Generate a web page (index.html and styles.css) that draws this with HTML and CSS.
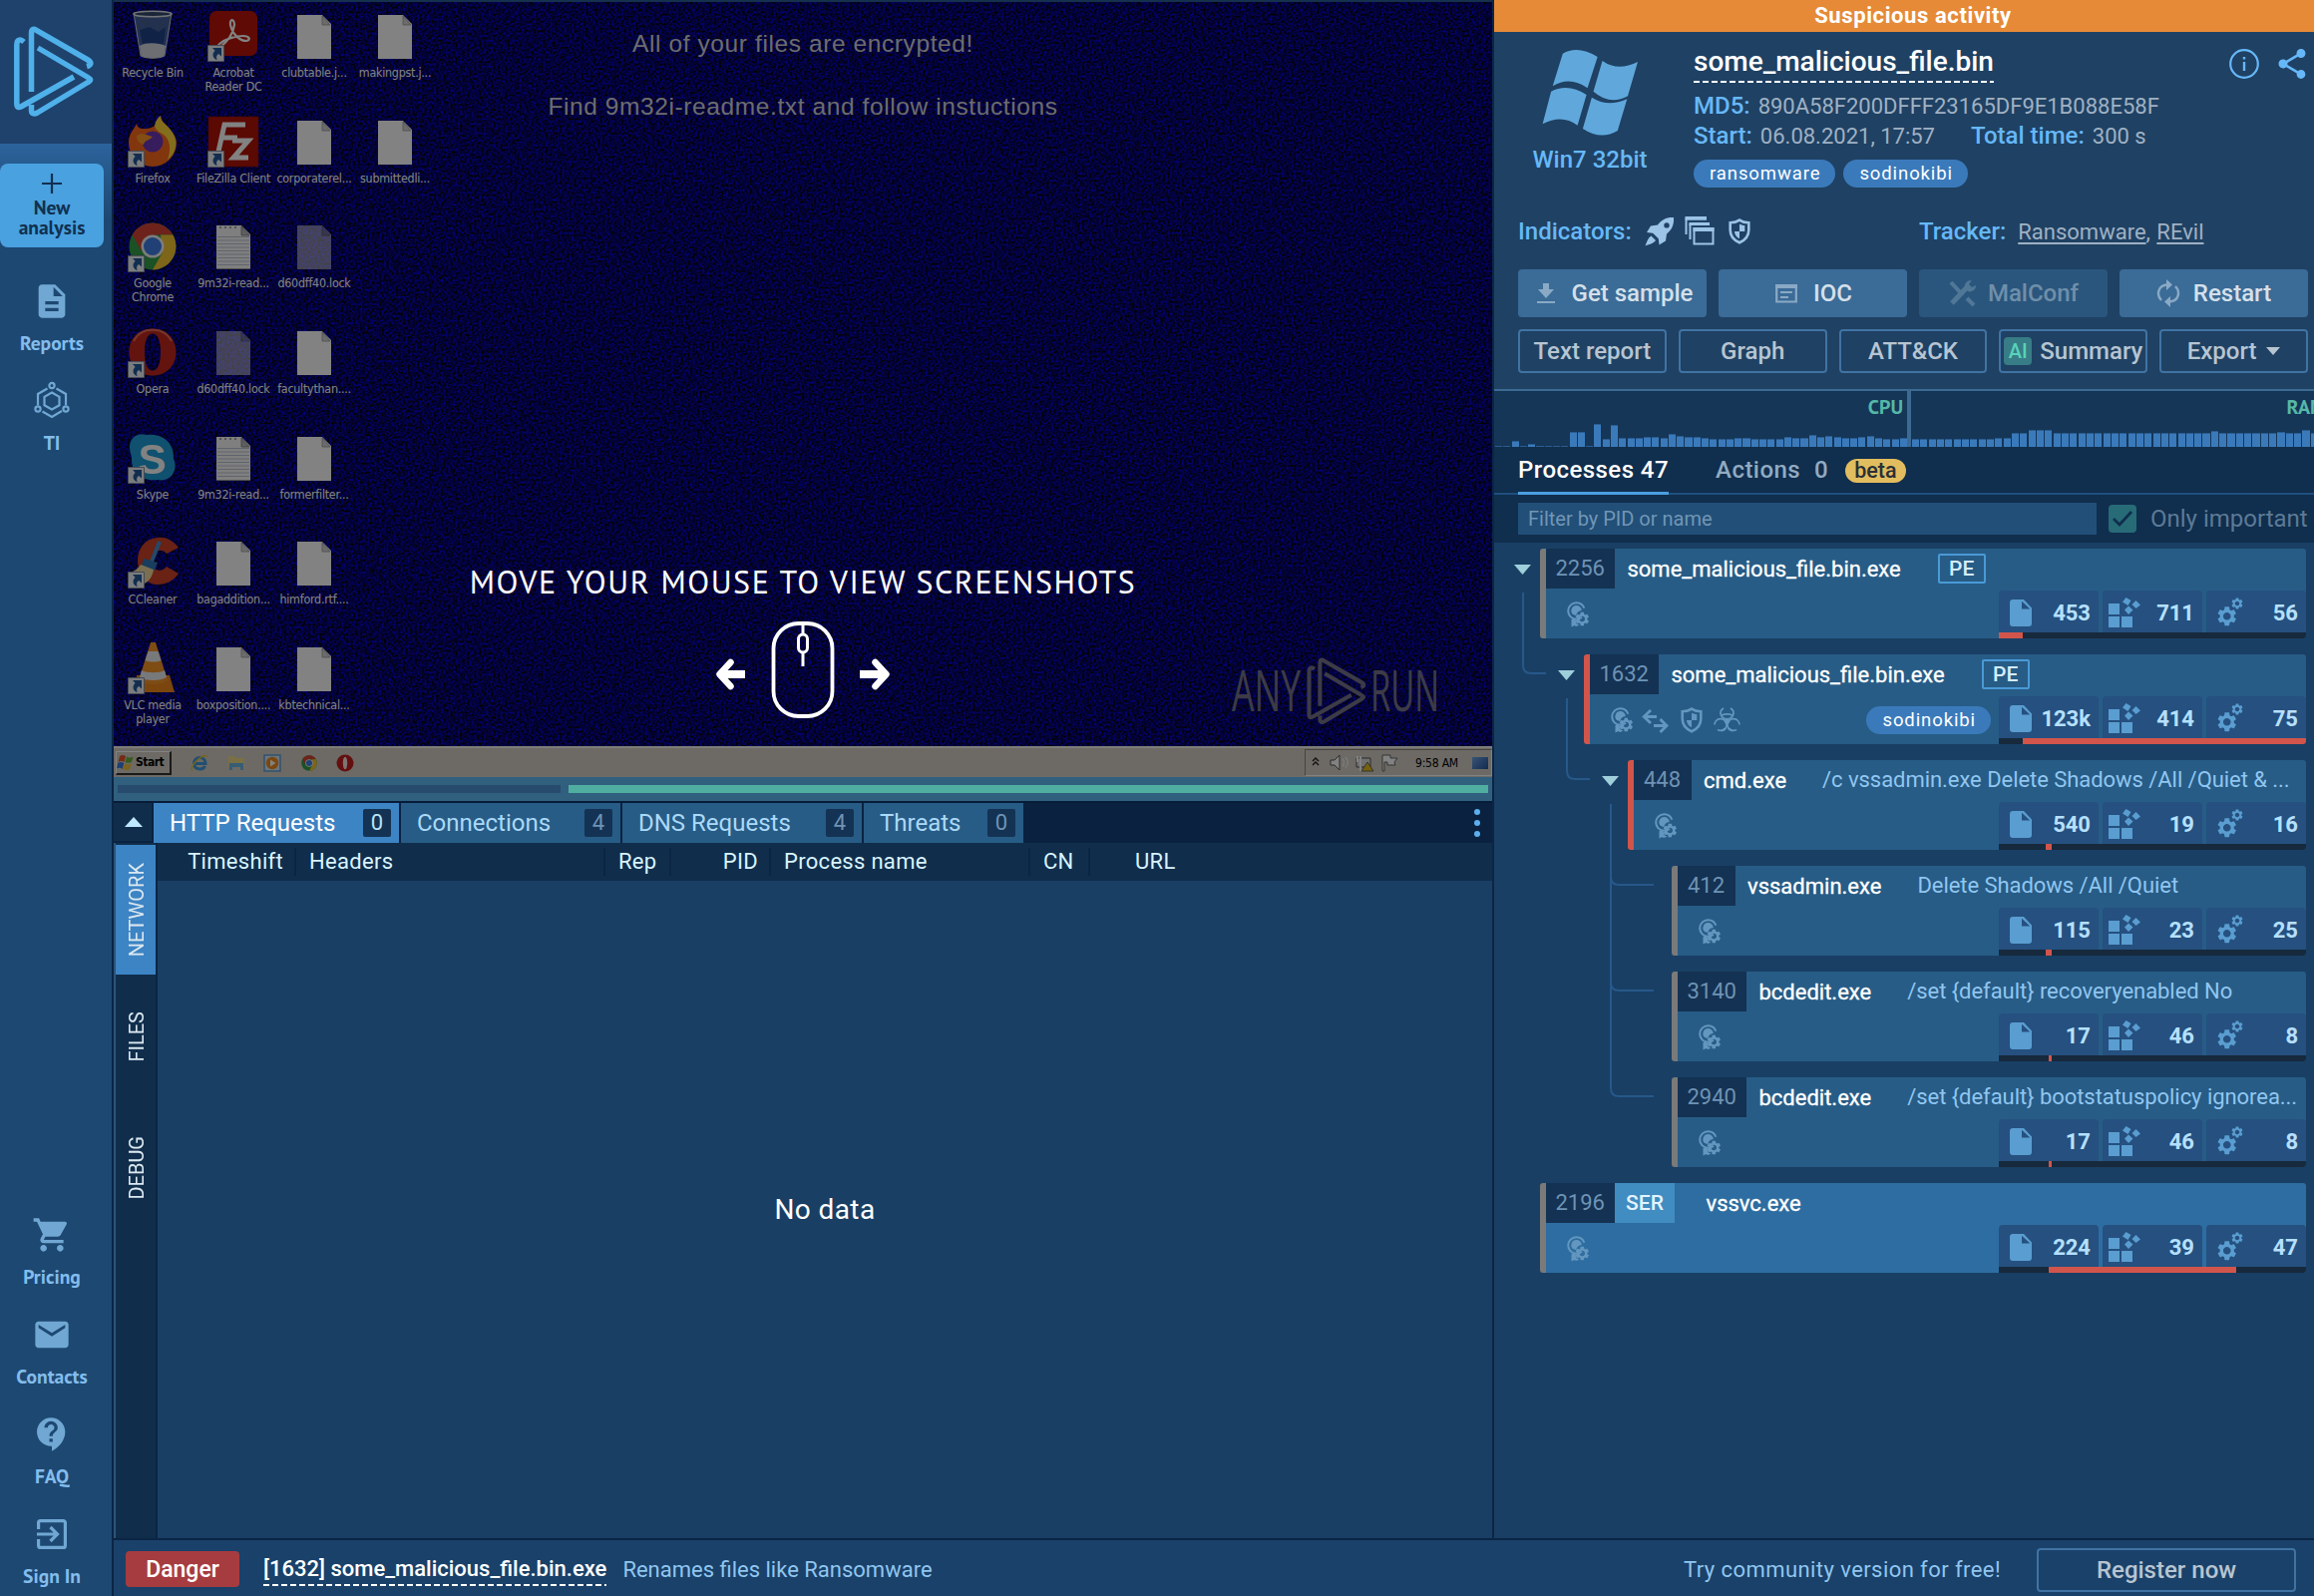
FILE: index.html
```html
<!DOCTYPE html>
<html lang="en">
<head>
<meta charset="utf-8">
<title>some_malicious_file.bin - analysis</title>
<link rel="stylesheet" href="styles.css">
</head>
<body>
<svg class="sprite" aria-hidden="true">
  <symbol id="gear" viewBox="0 0 24 24"><path d="M19.14 12.94c.04-.3.06-.61.06-.94 0-.32-.02-.64-.07-.94l2.03-1.58c.18-.14.23-.41.12-.61l-1.92-3.32c-.12-.22-.37-.29-.59-.22l-2.39.96c-.5-.38-1.03-.7-1.62-.94l-.36-2.54c-.04-.24-.24-.41-.48-.41h-3.84c-.24 0-.43.17-.47.41l-.36 2.54c-.59.24-1.13.57-1.62.94l-2.39-.96c-.22-.08-.47 0-.59.22L2.74 8.87c-.12.21-.08.47.12.61l2.03 1.58c-.05.3-.09.63-.09.94s.02.64.07.94l-2.03 1.58c-.18.14-.23.41-.12.61l1.92 3.32c.12.22.37.29.59.22l2.39-.96c.5.38 1.03.7 1.62.94l.36 2.54c.05.24.24.41.48.41h3.84c.24 0 .44-.17.47-.41l.36-2.54c.59-.24 1.13-.56 1.62-.94l2.39.96c.22.08.47 0 .59-.22l1.92-3.32c.12-.22.07-.47-.12-.61l-2.01-1.58zM12 15.9c-2.1 0-3.9-1.8-3.9-3.9s1.8-3.9 3.9-3.9 3.9 1.8 3.9 3.9-1.8 3.9-3.9 3.9z"/></symbol>
  <symbol id="s-file" viewBox="0 0 22 27"><path fill-rule="evenodd" d="M3 0h11l8 8.500v15.500a3 3 0 0 1-3 3H3a3 3 0 0 1-3-3V3a3 3 0 0 1 3-3zM12 1.800V9.500h8.300z"/></symbol>
  <symbol id="s-mods" viewBox="0 0 32 30"><path d="M0 6h11v11H0zM0 19h11v11H0zM13 19h11v11H13z"/><path d="M17.500 0l5 3-3 5-5.500-3.500zM27.500 3l4.500 4.500-4.500 3.500-4-4zM20 8.500l4.500 4-4.500 4.500-4-4.500z"/></symbol>
  <symbol id="s-gears" viewBox="0 0 27 30"><use href="#gear" x="-2" y="7" width="23.500" height="23.500"/><use href="#gear" x="13" y="-1" width="14" height="14"/></symbol>
  <symbol id="i-cert" viewBox="0 0 23 26"><circle cx="9.500" cy="9.500" r="8.300" fill="none" stroke="currentColor" stroke-width="2" stroke-dasharray="42 8" stroke-dashoffset="-7"/><path d="M9.500 4a5.300 5.300 0 0 1 5.300 5c-3 .2-5.300 2.700-5.600 5.300l-3.500-1.500A5.300 5.300 0 0 1 9.500 4zM4.500 18l4-.2 1 4.500 3 1.500-3.500 1.200-1.500-1-3 1.500z"/><use href="#gear" x="6.800" y="9" width="17" height="17"/></symbol>
  <symbol id="i-arrows" viewBox="0 0 27 24"><path fill="none" stroke="currentColor" stroke-width="2.800" d="M15 7.500H2M9 1L2.200 7.500 9 14M12 16.500h13M18.500 10l6.500 6.500-6.500 6.500"/></symbol>
  <symbol id="i-shield" viewBox="0 0 22 26"><path fill="none" stroke="currentColor" stroke-width="2.600" d="M11 1.600c2.800 2 6 2.600 9.300 2.700v7.200c0 6-3.600 10.300-9.300 12.800C5.300 21.800 1.700 17.500 1.700 11.500V4.300C5 4.200 8.200 3.600 11 1.600z"/><path d="M11 5.500c1.700 1 3.400 1.400 5.300 1.600V13H11zM11 13v7.300C7.800 18.600 6.200 16.300 5.900 13z"/></symbol>
  <symbol id="i-bio" viewBox="0 0 27 26"><g fill="none" stroke="currentColor" stroke-width="1.700"><path d="M10 1c-2.600 1.600-3.500 4.400-2.600 6.800 1 2.700 3.500 4 6.100 4s5.100-1.300 6.100-4c.9-2.400 0-5.200-2.600-6.800"/><path d="M1 17.500c.1-3 2.400-5.700 5.800-5.900 3.200-.1 5.900 2.200 6.200 5.200.3 3-1.200 5.800-4.800 7"/><path d="M26 17.500c-.1-3-2.400-5.700-5.800-5.900-3.200-.1-5.900 2.200-6.200 5.200-.3 3 1.200 5.800 4.800 7"/><path d="M4 22.500c2.500 1.500 5.500 1 7.500-1.500M23 22.500c-2.500 1.500-5.500 1-7.500-1.500M8 8.500c1.500-2.300 9.500-2.300 11 0"/></g><circle cx="13.500" cy="14" r="2.600"/></symbol>
  <symbol id="d-page" viewBox="0 0 34 44"><path fill="#fff" d="M0 0h25l9 9v35H0z"/><path fill="#d4d4d4" stroke="#999" stroke-width=".8" d="M25 1v9h8z"/></symbol>
  <symbol id="d-note" viewBox="0 0 34 44"><path fill="#fafafa" d="M0 0h25l9 9v35H0z"/><path stroke="#bcc4d4" stroke-width="1" d="M1 11.500h32M1 15h32M1 18.500h32M1 22h32M1 25.500h32M1 29h32M1 32.500h32M1 36h32M1 39.500h32"/><path stroke="#888" stroke-width="1.500" stroke-dasharray="2 3" d="M3 2h20"/><path fill="#bbb" stroke="#777" stroke-width=".8" d="M25 1v9h8z"/><path stroke="#777" stroke-width="1.500" d="M0 44h34"/></symbol>
  <symbol id="d-lnk" viewBox="0 0 17 17"><path fill="#f2f4fa" stroke="#8893a8" d="M.5.5h16v16H.5z"/><path fill="#245a9c" d="M5 3h9v8.500l-2.800-2.600C9 10.300 8.600 12 9.600 15 5.500 13.500 4 9.500 7.500 5.700z"/></symbol>
  <symbol id="d-chrome" viewBox="0 0 48 48"><circle cx="24" cy="24" r="23.500" fill="#34a04a"/><path fill="#d64535" d="M24 .5A23.500 23.500 0 0 1 44.400 12.500H24L13 29 3.600 12.300A23.500 23.500 0 0 1 24 .5z"/><path fill="#f5c633" d="M44.400 12.500A23.500 23.500 0 0 1 24 47.500l10-17.500-2-17.500z"/><circle cx="24" cy="24" r="11.500" fill="#f3f3f3"/><circle cx="24" cy="24" r="9" fill="#3f7fe8"/></symbol>
  <symbol id="d-opera" viewBox="0 0 48 48"><path fill="#c3281c" fill-rule="evenodd" d="M24 .5c14 0 23.500 10 23.500 23.500S38 47.500 24 47.500.5 38 .5 24 10 .5 24 .5zm0 5c-5.500 0-8 8-8 18.500S18.500 42.500 24 42.500 32 34.500 32 24 29.500 5.500 24 5.500z"/><path fill="none" stroke="#ea6a56" stroke-width="2" d="M5 13C10 4 16 1.800 24 1.800S38 4 43 13"/></symbol>
  <symbol id="brand" viewBox="0 0 80 92"><path fill="none" stroke="currentColor" stroke-width="5.500" stroke-linejoin="round" d="M17.500 66V7c0-4 2-4.500 5-2.700L74 34c4.500 2.700 3.300 5.300-1 6.500M24 22l50 29.500c3.500 2 3.500 3 0 5L23.500 87c-3.500 1.800-6 1-6-2.500V79M10 16c-4-3.500-7.200-2-7.200 3v59c0 4 2 4.200 5 2.500L60 51"/></symbol>
</svg>

<div class="app">
  <nav class="side">
    <div class="side-logo"><svg class="logo"><use href="#brand"/></svg></div>
    <a class="new-btn"><svg width="20" height="20"><path stroke="currentColor" stroke-width="2.200" d="M10 0v20M0 10h20"/></svg><span>New<br>analysis</span></a>
    <a class="nav"><svg viewBox="0 0 24 24"><path d="M14 2H6c-1.100 0-1.990.9-1.990 2L4 20c0 1.100.89 2 1.990 2H18c1.100 0 2-.9 2-2V8l-6-6zm2 16H8v-2h8v2zm0-4H8v-2h8v2zm-3-5V3.500L18.500 9H13z"/></svg><span>Reports</span></a>
    <a class="nav"><svg viewBox="0 0 40 40"><g fill="none" stroke="currentColor" stroke-width="2.200"><path d="M15.500 7.500L6 13v11M24.500 7.500L34 13v11M10.500 30.500L20 36l10-6"/><path d="M20 11.500l7.500 4.300v8.500L20 28.500l-7.500-4.200v-8.500z"/><circle cx="20" cy="4.500" r="2.600"/><circle cx="6" cy="28" r="2.600"/><circle cx="34" cy="28" r="2.600"/></g></svg><span>TI</span></a>
    <div class="spring"></div>
    <a class="nav"><svg viewBox="0 0 24 24"><path d="M7 18c-1.100 0-1.990.9-1.990 2S5.900 22 7 22s2-.9 2-2-.9-2-2-2zM1 2v2h2l3.600 7.590-1.350 2.450c-.16.28-.25.61-.25.96 0 1.100.9 2 2 2h12v-2H7.420c-.14 0-.25-.11-.25-.25l.03-.12.9-1.630h7.450c.75 0 1.410-.41 1.750-1.030l3.580-6.490c.08-.14.12-.31.12-.48 0-.55-.45-1-1-1H5.210l-.94-2H1zm16 16c-1.100 0-1.990.9-1.990 2s.89 2 1.990 2 2-.9 2-2-.9-2-2-2z"/></svg><span>Pricing</span></a>
    <a class="nav"><svg viewBox="0 0 24 24"><path d="M20 4H4c-1.100 0-1.990.9-1.990 2L2 18c0 1.100.9 2 2 2h16c1.100 0 2-.9 2-2V6c0-1.100-.9-2-2-2zm0 4l-8 5-8-5V6l8 5 8-5v2z"/></svg><span>Contacts</span></a>
    <a class="nav"><svg viewBox="0 0 24 24"><path d="M11.500 2C6.810 2 3 5.810 3 10.500S6.810 19 11.500 19h.5v3c4.860-2.340 8-7 8-11.500C20 5.810 16.190 2 11.500 2zm1 14.500h-2v-2h2v2zm0-3.500h-2c0-3.250 3-3 3-5 0-1.100-.9-2-2-2s-2 .9-2 2h-2c0-2.210 1.790-4 4-4s4 1.790 4 4c0 2.500-3 2.750-3 5z"/></svg><span>FAQ</span></a>
    <a class="nav"><svg viewBox="0 0 40 40"><g fill="none" stroke="currentColor" stroke-width="3.200"><path d="M6.600 15V8.600a2 2 0 0 1 2-2h22.800a2 2 0 0 1 2 2v22.800a2 2 0 0 1-2 2H8.600a2 2 0 0 1-2-2V25"/><path d="M5 20h20M18.500 13l7 7-7 7"/></g></svg><span>Sign In</span></a>
  </nav>

  <div class="main">
    <div class="work">
      <section class="center">
        <div class="screen">
          <svg class="noise"><filter id="grain" x="0" y="0" width="100%" height="100%" color-interpolation-filters="sRGB"><feTurbulence type="fractalNoise" baseFrequency=".42" numOctaves="2" seed="4"/><feColorMatrix values="0 0 0 0 .025  0 0 0 0 .02  1.700 0 0 0 -.42  0 0 0 0 1"/></filter><rect width="100%" height="100%" filter="url(#grain)"/></svg>
          <div class="desk-icons">
            <div class="di"><svg viewBox="0 0 52 52"><path fill="#5c7fa8" fill-opacity=".75" stroke="#c9d4e2" d="M7 3h38l-7 43c-5 3-19 3-24 0z"/><path fill="#22448c" d="M13 20l10-3 9 5 7-5-2 18H16z"/><path fill="#d5d8de" d="M13 36c6-4 20-3 26 0l-1.500 10c-5 3-18 3-23 0z"/><ellipse cx="26" cy="4" rx="19" ry="2.800" fill="#33496e" stroke="#dfe6ee" stroke-width="1.500"/></svg><span>Recycle Bin</span></div>
            <div class="di"><svg viewBox="0 0 52 52"><path fill="#ff6a1c" d="M2 27C2 18 7 14 10 8c1 4 3 5 7 5 6 0 9-1 12-4 1-5 3-7 5-9 0 6 5 8 9 13 5 6 7 10 7 14a24 24 0 0 1-48 0z"/><path fill="#ffd83a" d="M34 0c0 6 5 8 9 13 5 6 7 11 6 18-1 6-4 10-8 13 3-8 3-16-1-22-4-5-11-6-12-12 1-5 3-8 6-10z"/><circle cx="26" cy="26" r="10.500" fill="#6c37b8"/><path fill="#ff9a26" d="M10 20c6-4 10 0 16 1-3 4-8 3-9 8-4-1-7-4-7-9z"/><use href="#d-lnk" x="1" y="35" width="17" height="17"/></svg><span>Firefox</span></div>
            <div class="di"><svg viewBox="0 0 52 52"><use href="#d-chrome" x="2" y="2" width="48" height="48"/><use href="#d-lnk" x="1" y="35" width="17" height="17"/></svg><span>Google<br>Chrome</span></div>
            <div class="di"><svg viewBox="0 0 52 52"><use href="#d-opera" x="2" y="2" width="48" height="48"/><use href="#d-lnk" x="1" y="35" width="17" height="17"/></svg><span>Opera</span></div>
            <div class="di"><svg viewBox="0 0 52 52"><path fill="#1f9fd8" d="M3 15C3 6 11 0 20 3c16-2 28 8 27 24 5 10-2 24-16 21C14 50 4 40 5 25c-1-3-2-6-2-10z"/><text x="25.500" y="42" class="skype">S</text><use href="#d-lnk" x="1" y="35" width="17" height="17"/></svg><span>Skype</span></div>
            <div class="di"><svg viewBox="0 0 52 52"><path fill="#cf4328" d="M52 11C46 3 38 0 31 1 18 2 11 12 11 24c0 14 9 24 20 24 9 0 16-4 21-11l-12-7c-3 4-8 5-12 2-4-4-4-14 0-17 4-2 9-2 12 2z"/><path stroke="#4a8fce" stroke-width="4" d="M33 5l-8 20"/><path fill="#2f78b8" d="M17 22l14 4-3 8-13-5z"/><path fill="#f0dca0" d="M14 28l13 5c-1 7-5 12-9 14L2 36c6-1 9-4 12-8z"/><use href="#d-lnk" x="1" y="35" width="17" height="17"/></svg><span>CCleaner</span></div>
            <div class="di"><svg viewBox="0 0 52 52"><path fill="#f08a1c" d="M10 33h33l5 17H8z"/><path fill="#f7952a" d="M24 0h5l12 38c-6 5-23 5-29 0z"/><path fill="#eceef2" d="M21.500 9h10l3 9c-4 2-12 2-16 0zM15 28c5 3 18 3 23 0l2 7c-6 4-21 4-27 0z"/><use href="#d-lnk" x="1" y="35" width="17" height="17"/></svg><span>VLC media<br>player</span></div>

            <div class="di"><svg viewBox="0 0 52 52"><rect x="2" y="1" width="48" height="45" rx="7" fill="#bb1409"/><path fill="none" stroke="#fff" stroke-width="2.200" d="M12 37c8-4 14-14 15-22 0-7-5-6-4 0 2 9 9 16 16 16 5-1 3-5-3-5-8 0-18 3-24 8-2 2-1 4 0 3z"/><use href="#d-lnk" x="0" y="35" width="17" height="17"/></svg><span>Acrobat<br>Reader DC</span></div>
            <div class="di"><svg viewBox="0 0 52 52"><rect x="1" y="1" width="50" height="50" fill="#b21207" stroke="#8a0d05" stroke-dasharray="3 2"/><path fill="none" stroke="#fff" stroke-width="5" d="M38 9H17L11 36M15 22h15M25 25h16L26 42h15"/><use href="#d-lnk" x="0" y="35" width="17" height="17"/></svg><span>FileZilla Client</span></div>
            <div class="di"><svg viewBox="0 0 52 52"><use href="#d-note" x="9" y="5" width="34" height="44"/></svg><span>9m32i-read...</span></div>
            <div class="di"><svg class="ghost" viewBox="0 0 52 52"><use href="#d-page" x="9" y="5" width="34" height="44"/></svg><span>d60dff40.lock</span></div>
            <div class="di"><svg viewBox="0 0 52 52"><use href="#d-note" x="9" y="5" width="34" height="44"/></svg><span>9m32i-read...</span></div>
            <div class="di"><svg viewBox="0 0 52 52"><use href="#d-page" x="9" y="5" width="34" height="44"/></svg><span>bagaddition...</span></div>
            <div class="di"><svg viewBox="0 0 52 52"><use href="#d-page" x="9" y="5" width="34" height="44"/></svg><span>boxposition....</span></div>

            <div class="di"><svg viewBox="0 0 52 52"><use href="#d-page" x="9" y="5" width="34" height="44"/></svg><span>clubtable.j...</span></div>
            <div class="di"><svg viewBox="0 0 52 52"><use href="#d-page" x="9" y="5" width="34" height="44"/></svg><span>corporaterel...</span></div>
            <div class="di"><svg class="ghost" viewBox="0 0 52 52"><use href="#d-page" x="9" y="5" width="34" height="44"/></svg><span>d60dff40.lock</span></div>
            <div class="di"><svg viewBox="0 0 52 52"><use href="#d-page" x="9" y="5" width="34" height="44"/></svg><span>facultythan....</span></div>
            <div class="di"><svg viewBox="0 0 52 52"><use href="#d-page" x="9" y="5" width="34" height="44"/></svg><span>formerfilter...</span></div>
            <div class="di"><svg viewBox="0 0 52 52"><use href="#d-page" x="9" y="5" width="34" height="44"/></svg><span>himford.rtf....</span></div>
            <div class="di"><svg viewBox="0 0 52 52"><use href="#d-page" x="9" y="5" width="34" height="44"/></svg><span>kbtechnical...</span></div>

            <div class="di"><svg viewBox="0 0 52 52"><use href="#d-page" x="9" y="5" width="34" height="44"/></svg><span>makingpst.j...</span></div>
            <div class="di"><svg viewBox="0 0 52 52"><use href="#d-page" x="9" y="5" width="34" height="44"/></svg><span>submittedli...</span></div>
          </div>
          <div class="wall"><p>All of your files are encrypted!</p><p>Find 9m32i-readme.txt and follow instuctions</p></div>
          <svg class="mark" viewBox="0 0 208 68"><text x="0" y="54" textLength="69" lengthAdjust="spacingAndGlyphs">ANY</text><use href="#brand" x="75" y="0" width="60" height="68"/><text x="139" y="54" textLength="69" lengthAdjust="spacingAndGlyphs">RUN</text></svg>
          <div class="taskbar">
            <div class="start"><svg width="18" height="18" viewBox="0 0 18 18"><path fill="#e8552a" d="M3 3c2-1.500 4-1.500 6 0L7.500 9c-2-1.200-4-1.200-6 0z"/><path fill="#6fb43c" d="M10 3.500c2 1.200 4 1.200 6.500 0L15 9c-2.500 1.200-4.500 1-6.500.2z"/><path fill="#3d7be0" d="M1.200 10c2-1.500 4-1.500 6 0l-1.500 6c-2-1.500-4-1.500-5.700-.5z"/><path fill="#f4c22e" d="M8 10.500c2 1.200 4 1.200 6.500 0L13 16c-2 1.200-4.500 1.200-6.500 0z"/></svg>Start</div>
            <div class="quick">
              <svg viewBox="0 0 18 18"><path fill="none" stroke="#3f9be0" stroke-width="3" d="M3.500 9.500H15c0-8-11.500-8-11.500 0 0 6.500 9 7 11 2.500"/><path fill="none" stroke="#e9c53c" stroke-width="1.500" d="M1.500 16.500C-1 12 12-1 17 2.500"/></svg>
              <svg viewBox="0 0 18 18"><path fill="#f0dc86" d="M1 2h6l1 2h9v9H1z"/><path fill="#6db5e4" d="M2 9h14v7h-3v-3H5v3H2z"/></svg>
              <svg viewBox="0 0 18 18"><path fill="#d5e6f5" stroke="#5fa0d8" stroke-width="1.500" d="M1 1h16v16H1z"/><circle cx="9" cy="9" r="6.200" fill="#f08b1d"/><path fill="#fff" d="M7 5.500l5.500 3.500L7 12.500z"/></svg>
              <svg viewBox="0 0 18 18"><use href="#d-chrome" x="1" y="1" width="16" height="16"/></svg>
              <svg viewBox="0 0 18 18"><circle cx="9" cy="9" r="8.500" fill="#c41e1e"/><ellipse cx="9" cy="9" rx="2.200" ry="6.300" fill="#f5e4e4"/></svg>
            </div>
            <div class="tray">
              <svg width="90" height="20" viewBox="0 0 90 20"><path fill="none" stroke="#222" stroke-width="1.400" d="M3 8l3-3 3 3M3 12l3-3 3 3"/><path fill="#fff" stroke="#555" d="M21 7h4l5-5v15l-5-5h-4z"/><path fill="none" stroke="#eee" stroke-width="1.500" d="M33 5.500q3 4 0 8M36 4q4.500 5.500 0 11"/><path fill="#ddd" stroke="#555" d="M47 5h14v9H47z"/><path fill="#e8c01c" stroke="#665" d="M58 9l6 9H52z"/><path fill="none" stroke="#fff" stroke-width="2" d="M48 3v6M51 3v15"/><path fill="#fff" stroke="#666" d="M73 2h8v3h7l-3 4 1 3h-8V9h-3v9h-2z"/></svg>
              <span>9:58 AM</span><i class="showdesk"></i>
            </div>
          </div>
          <div class="dim"></div>
          <div class="hint">
            <p>MOVE YOUR MOUSE TO VIEW SCREENSHOTS</p>
            <svg width="174" height="98" viewBox="0 0 174 98"><g fill="none" stroke="#fff"><rect x="57.500" y="2" width="59" height="93" rx="25" stroke-width="3.800"/><path stroke-width="3" d="M87 2v11M87 31v14"/><rect x="82.500" y="13" width="9" height="18" rx="4.500" stroke-width="3"/><g stroke-width="6.500" stroke-linecap="round" stroke-linejoin="round"><path d="M14.500 41L3.500 53l11 12"/><path d="M159.500 41l11 12-11 12"/></g><g stroke-width="8"><path d="M6 53h23" stroke-linecap="butt"/><path d="M144 53h23"/></g></g></svg>
          </div>
        </div>
        <div class="timeline"><i class="t-off"></i><i class="t-on"></i></div>
        <div class="tabs">
          <div class="toggle"><svg width="18" height="10"><path fill="#bfe8ff" d="M9 0l9 10H0z"/></svg></div>
          <div class="tab on w1">HTTP Requests<b>0</b></div>
          <div class="tab w2">Connections<b>4</b></div>
          <div class="tab w3">DNS Requests<b>4</b></div>
          <div class="tab w4">Threats<b>0</b></div>
          <svg class="dots" width="8" height="30"><circle cx="4" cy="4" r="3"/><circle cx="4" cy="15" r="3"/><circle cx="4" cy="26" r="3"/></svg>
        </div>
        <div class="lower">
          <div class="vtabs"><div class="v on"><span>NETWORK</span></div><div class="v f"><span>FILES</span></div><div class="v d"><span>DEBUG</span></div></div>
          <div class="table">
            <div class="thead"><span class="r">Timeshift</span><span>Headers</span><span>Rep</span><span class="r">PID</span><span>Process name</span><span>CN</span><span class="url">URL</span></div>
            <div class="nodata">No data</div>
          </div>
        </div>
      </section>

      <aside class="panel"><div class="panel-in">
        <div class="verdict">Suspicious activity</div>
        <header class="info">
          <div class="top">
            <div class="os"><svg width="96" height="88" viewBox="0 0 96 88"><path d="M20.800 4.700Q36-4 55.700 8L45.600 39.300Q28 27 10.700 37.300zM60.500 12Q76 23 96 13L86 47.300Q68 57 51.500 42.700zM9.100 42.700Q26 34 44.600 46L35.600 76.700Q20 65 .6 75.300zM49.900 48.700Q66 59 85.300 50.300L75.800 82Q59 92 40.900 80z"/></svg><span>Win7 32bit</span></div>
            <div class="meta">
              <div class="fname">some_malicious_file.bin</div>
              <div class="kv"><b>MD5:</b>890A58F200DFFF23165DF9E1B088E58F</div>
              <div class="kv"><b>Start:</b>06.08.2021, 17:57<b class="tt">Total time:</b>300 s</div>
              <div class="pills"><span class="pill">ransomware</span><span class="pill">sodinokibi</span></div>
            </div>
            <div class="acts"><svg width="30" height="30"><circle cx="15" cy="15" r="13.800" fill="none" stroke="currentColor" stroke-width="2.200"/><path fill="currentColor" d="M13.800 8h2.400v2.600h-2.400zM13.800 13h2.400v9h-2.400z"/></svg><svg width="36" height="36" viewBox="0 0 24 24"><path fill="currentColor" d="M18 16.080c-.76 0-1.440.3-1.960.77L8.910 12.700c.05-.23.09-.46.09-.7s-.04-.47-.09-.7l7.050-4.110c.54.5 1.250.81 2.040.81 1.660 0 3-1.340 3-3s-1.340-3-3-3-3 1.340-3 3c0 .24.04.47.09.7L8.040 9.810C7.500 9.310 6.790 9 6 9c-1.660 0-3 1.340-3 3s1.340 3 3 3c.79 0 1.500-.31 2.040-.81l7.120 4.160c-.05.21-.08.43-.08.65 0 1.610 1.310 2.920 2.920 2.920s2.920-1.310 2.920-2.920-1.310-2.920-2.920-2.920z"/></svg></div>
          </div>
          <div class="ind">
            <div class="ind-l"><b>Indicators:</b>
              <svg class="rocket" width="30" height="30" viewBox="0 0 30 30"><path fill-rule="evenodd" d="M29 1c.5 7-1.500 12-7 16.500l-1 7-6.500 4-.7-6.200-5.600-5.600L2 16l4-6.500 7-1C17 3 22 .5 29 1zM22 6.200a2.700 2.700 0 1 0 0 5.400 2.700 2.700 0 0 0 0-5.400z"/><path d="M6.500 19.500l4.500 4.500c-2 3-5.500 3.500-10.500 5.500 2-5 3-8.500 6-10z"/></svg>
              <svg class="wins" width="30" height="30" viewBox="0 0 30 30"><path fill="none" stroke="currentColor" stroke-width="2" d="M1.500 18V2.500H22M5.500 23V8H25M9.500 12v15.500h19V12z"/><path d="M.5 0H22v3.500H.5zM4.500 6H25v3H4.500zM8.500 11h21v4h-21z"/></svg>
              <svg width="22" height="26"><use href="#i-shield"/></svg>
            </div>
            <div class="ind-r"><b>Tracker:</b><u>Ransomware</u>, <u class="rv">REvil</u></div>
          </div>
          <div class="btns four">
            <a class="btn"><svg width="18" height="20"><path d="M6 0h6v6h5l-8 9-8-9h5zM0 18h18v2H0z"/></svg>Get sample</a>
            <a class="btn"><svg class="gap" width="22" height="20"><path fill="none" stroke="currentColor" stroke-width="2.200" d="M1.200 2.500h19.600v16H1.200zM5 9h12M5 14h8"/><path d="M0 1h22v4H0z"/></svg>IOC</a>
            <a class="btn off"><svg width="28" height="28"><path fill="none" stroke="currentColor" stroke-width="5" d="M4 24L20 7"/><path fill="none" stroke="currentColor" stroke-width="4" d="M3 3l11 12M19 19l7 7"/><path d="M17 9c-1-5 2-8 7-8l-3 4 3 3 4-2c0 5-4 7-8 6z"/></svg>MalConf</a>
            <a class="btn"><svg width="24" height="28"><path fill="none" stroke="currentColor" stroke-width="2.400" d="M5 21C0 16 1 6 11 5.500M19 7c5 5 4 15-6 15.500"/><path d="M10 0l6 5.500-6 5.500zM14 17l-6 5.500 6 5.500z"/></svg>Restart</a>
          </div>
          <div class="btns five"><a class="ol">Text report</a><a class="ol">Graph</a><a class="ol">ATT&amp;CK</a><a class="ol sum"><i>AI</i>Summary</a><a class="ol">Export<svg width="14" height="8"><path d="M0 0h14L7 8z"/></svg></a></div>
        </header>
        <div class="charts"><div class="chart" id="cpu"><span>CPU</span></div><div class="chart" id="ram"><span>RAM</span></div></div>
        <div class="ptabs"><div class="pt on">Processes 47</div><div class="pt">Actions<span>0</span></div><em>beta</em></div>
        <div class="filter"><div class="input">Filter by PID or name</div><i class="check"><svg width="28" height="28"><path fill="none" stroke="#102e4d" stroke-width="2.800" d="M5 14l6 6L23 7"/></svg></i><span>Only important</span></div>
        <div class="tree">
          <svg class="lines" width="200" height="620" viewBox="1498 544 200 620"><path d="M1527 594v73q0 8 8 8h15M1571 700v73q0 8 8 8h15M1615 806v73q0 8 8 8h35M1615 879v106q0 8 8 8h35M1615 985v106q0 8 8 8h35"/><g class="tri"><path d="M1518 566h17l-8.500 10z"/><path d="M1562 672h17l-8.500 10z"/><path d="M1606 778h17l-8.500 10z"/></g></svg>
          <div class="proc l0"><div class="r1"><i>2256</i><strong>some_malicious_file.bin.exe</strong><em>PE</em></div>
            <div class="r2"><svg class="c"><use href="#i-cert"/></svg></div>
            <div class="stats"><div><svg class="sf"><use href="#s-file"/></svg>453</div><div><svg class="sm"><use href="#s-mods"/></svg>711</div><div><svg class="sg"><use href="#s-gears"/></svg>56</div></div>
            <div class="life"><i style="margin-left:0;width:24px"></i></div></div>
          <div class="proc l1 red"><div class="r1"><i>1632</i><strong>some_malicious_file.bin.exe</strong><em>PE</em></div>
            <div class="r2"><svg class="c"><use href="#i-cert"/></svg><svg class="ar"><use href="#i-arrows"/></svg><svg class="sh"><use href="#i-shield"/></svg><svg class="bi"><use href="#i-bio"/></svg><span class="pill">sodinokibi</span></div>
            <div class="stats"><div><svg class="sf"><use href="#s-file"/></svg>123k</div><div><svg class="sm"><use href="#s-mods"/></svg>414</div><div><svg class="sg"><use href="#s-gears"/></svg>75</div></div>
            <div class="life"><i style="margin-left:24px;width:284px"></i></div></div>
          <div class="proc l2 red"><div class="r1"><i>448</i><strong>cmd.exe</strong><span>/c vssadmin.exe Delete Shadows /All /Quiet &amp; ...</span></div>
            <div class="r2"><svg class="c"><use href="#i-cert"/></svg></div>
            <div class="stats"><div><svg class="sf"><use href="#s-file"/></svg>540</div><div><svg class="sm"><use href="#s-mods"/></svg>19</div><div><svg class="sg"><use href="#s-gears"/></svg>16</div></div>
            <div class="life"><i style="margin-left:47px;width:6px"></i></div></div>
          <div class="proc l3"><div class="r1"><i>412</i><strong>vssadmin.exe</strong><span>Delete Shadows /All /Quiet</span></div>
            <div class="r2"><svg class="c"><use href="#i-cert"/></svg></div>
            <div class="stats"><div><svg class="sf"><use href="#s-file"/></svg>115</div><div><svg class="sm"><use href="#s-mods"/></svg>23</div><div><svg class="sg"><use href="#s-gears"/></svg>25</div></div>
            <div class="life"><i style="margin-left:47px;width:6px"></i></div></div>
          <div class="proc l3"><div class="r1"><i>3140</i><strong>bcdedit.exe</strong><span>/set {default} recoveryenabled No</span></div>
            <div class="r2"><svg class="c"><use href="#i-cert"/></svg></div>
            <div class="stats"><div><svg class="sf"><use href="#s-file"/></svg>17</div><div><svg class="sm"><use href="#s-mods"/></svg>46</div><div><svg class="sg"><use href="#s-gears"/></svg>8</div></div>
            <div class="life"><i style="margin-left:50px;width:3px"></i></div></div>
          <div class="proc l3"><div class="r1"><i>2940</i><strong>bcdedit.exe</strong><span>/set {default} bootstatuspolicy ignorea...</span></div>
            <div class="r2"><svg class="c"><use href="#i-cert"/></svg></div>
            <div class="stats"><div><svg class="sf"><use href="#s-file"/></svg>17</div><div><svg class="sm"><use href="#s-mods"/></svg>46</div><div><svg class="sg"><use href="#s-gears"/></svg>8</div></div>
            <div class="life"><i style="margin-left:50px;width:3px"></i></div></div>
          <div class="proc l0 svc"><div class="r1"><i>2196</i><b>SER</b><strong>vssvc.exe</strong></div>
            <div class="r2"><svg class="c"><use href="#i-cert"/></svg></div>
            <div class="stats"><div><svg class="sf"><use href="#s-file"/></svg>224</div><div><svg class="sm"><use href="#s-mods"/></svg>39</div><div><svg class="sg"><use href="#s-gears"/></svg>47</div></div>
            <div class="life"><i style="margin-left:50px;width:188px"></i></div></div>
        </div>
      </div></aside>
    </div>
    <footer class="foot"><span class="danger">Danger</span><span class="fp">[1632] some_malicious_file.bin.exe</span><span class="ft">Renames files like Ransomware</span><span class="ft try">Try community version for free!</span><a class="reg">Register now</a></footer>
  </div>
</div>
<script src="script.js"></script>
</body>
</html>
```
FILE: script.js
```js
// Load samples over the run, in pixels of bar height.
const samples = {
  cpu: [1,1,6,0,3,0,1,1,0,15,15,0,23,8,22,9,9,9,10,10,9,13,11,10,10,9,8,8,8,9,9,8,8,8,8,10,9,9,12,10,11,10,9,9,10,11,9,8,8,9],
  ram: [8,8,8,8,8,8,8,8,8,8,9,9,14,14,17,17,17,14,14,14,14,14,14,14,14,14,14,14,14,14,14,14,14,14,14,14,16,14,14,14,14,14,14,14,15,14,14,17,14,14]
};
for (const [id, values] of Object.entries(samples)) {
  const chart = document.getElementById(id);
  for (const v of values) {
    const bar = document.createElement('i');
    bar.style.height = v + 'px';
    chart.append(bar);
  }
}
```
FILE: styles.css
```css
* { box-sizing: border-box; margin: 0; padding: 0; }
body { width: 2320px; height: 1600px; overflow: hidden; background: #193f64; font-family: Roboto, sans-serif; font-size: 22px; color: #fff; }
svg { display: block; fill: currentColor; flex: none; }
i, em { font-style: normal; }
b { font-weight: 500; }
.sprite { position: absolute; width: 0; height: 0; }
.app { display: flex; width: 2320px; height: 1600px; }

/* sidebar */
.side { width: 114px; flex: none; display: flex; flex-direction: column; border-right: 2px solid #0b2545; background: linear-gradient(#2c639c 144px, #1d4872 220px); font-family: "PT Sans", "Open Sans", "Noto Sans", sans-serif; font-stretch: 85%; font-weight: 700; font-size: 19.5px; }
.side-logo { height: 144px; background: #1e426b; padding: 26px 0 0 14px; color: #4fb0ea; }
.logo { width: 80px; height: 92px; }
.new-btn { width: 104px; height: 84px; margin: 20px 0 16px; border-radius: 8px; background: #49a1e0; color: #11304f; display: flex; flex-direction: column; align-items: center; padding-top: 10px; text-align: center; line-height: 20px; }
.new-btn span { margin-top: 4px; }
.nav { width: 104px; height: 100px; display: flex; flex-direction: column; align-items: center; color: #70a8d3; padding-top: 18px; }
.nav svg { width: 40px; height: 40px; }
.nav span { color: #83bdec; line-height: 24px; margin-top: 10px; }
.spring { flex: 1; }

.main { flex: 1; display: flex; flex-direction: column; min-width: 0; }
.work { flex: 1; display: flex; min-height: 0; }
.center { width: 1384px; flex: none; border-right: 2px solid #0b2545; display: flex; flex-direction: column; }

/* remote screen */
.screen { position: relative; height: 779px; border-top: 2px solid #14304c; background: #0c0c70; overflow: hidden; }
.noise { position: absolute; inset: 0; width: 100%; height: 100%; }
.desk-icons { position: absolute; left: -1.5px; top: 8px; display: grid; grid-auto-flow: column; grid-template-rows: repeat(7, 105.7px); grid-auto-columns: 81px; font: 12.4px/14px Tahoma, "DejaVu Sans Condensed", "DejaVu Sans", sans-serif; font-stretch: 75%; letter-spacing: -.25px; color: #fff; }
.di { display: flex; flex-direction: column; align-items: center; text-align: center; white-space: nowrap; }
.di svg { width: 52px; height: 52px; margin-bottom: 4px; }
.ghost { opacity: .5; }
.skype { font: 700 42px "Liberation Sans", sans-serif; fill: #fff; text-anchor: middle; }
.wall { position: absolute; left: 0; right: 0; top: 25px; text-align: center; font: 24.500px/34px "Liberation Sans", sans-serif; letter-spacing: .6px; color: #d4d4da; }
.wall p { margin-bottom: 29px; }
.mark { position: absolute; left: 1121px; top: 657px; width: 208px; height: 68px; color: #77758c; overflow: visible; }
.mark text { font: 400 56px "Open Sans", "Noto Sans", sans-serif; }
.taskbar { position: absolute; left: 0; right: 0; bottom: 0; height: 31px; background: #d6d0c6; border-top: 2px solid #f6f4ee; display: flex; align-items: center; color: #000; }
.start { width: 56px; height: 24px; margin-left: 2px; border: 1px solid; border-color: #fff #333 #333 #fff; border-right-width: 2px; border-bottom-width: 2px; display: flex; align-items: center; gap: 1px; font: 700 12px "DejaVu Sans Condensed", sans-serif; font-stretch: 75%; letter-spacing: -.5px; }
.quick { display: flex; gap: 18.500px; margin-left: 19px; }
.quick svg { width: 18px; height: 18px; }
.tray { margin-left: auto; height: 27px; width: 188px; border: 1px solid; border-color: #8a857c #fff #fff #8a857c; display: flex; align-items: center; font: 12px "DejaVu Sans Condensed", sans-serif; font-stretch: 75%; letter-spacing: -.2px; padding-left: 4px; }
.tray span { margin-left: 16px; }
.showdesk { width: 16px; height: 12px; margin-left: auto; margin-right: 3px; background: linear-gradient(135deg, #6ea6e8, #24539f); }
.dim { position: absolute; inset: 0; background: rgba(0,0,0,.49); }
.hint { position: absolute; left: 0; right: 0; top: 558px; display: flex; flex-direction: column; align-items: center; gap: 17px; }
.hint p { font: 32px/46px "PT Sans", "Open Sans", "Noto Sans", sans-serif; font-stretch: 88%; letter-spacing: 1.55px; }

.timeline { height: 24px; background: #31607f; display: flex; gap: 8px; padding: 8px 4px; }
.t-off { width: 444px; background: #264b6c; }
.t-on { flex: 1; background: #4fae9f; }
.tabs { height: 42px; border-top: 2px solid #071c38; background: #0a2240; display: flex; gap: 2px; }
.toggle { width: 38px; height: 38px; background: #102e4c; display: flex; align-items: center; justify-content: center; padding-left: 1px; }
.tab { height: 40px; display: flex; align-items: center; justify-content: space-between; padding: 0 8px 0 16px; background: #275c86; color: #abd9f8; font-size: 24px; }
.tab.on { background: #3d84c4; color: #fff; }
.tab b { width: 28px; height: 28px; border-radius: 2px; background: #143253; color: #6e93b5; font-weight: 400; font-size: 22px; line-height: 28px; text-align: center; }
.tab.on b { color: #b8e2f8; }
.w1 { width: 246px; } .w2 { width: 220px; } .w3 { width: 240px; } .w4 { width: 160px; }
.dots { margin: 5px 11px 0 auto; fill: #5cb0f0; }
.lower { flex: 1; display: flex; min-height: 0; }
.vtabs { width: 44px; border-left: 2px solid #2a5579; border-right: 2px solid #0b2545; background: #102e4c; padding-top: 2px; font-size: 20px; color: #dbe8f0; }
.v { display: flex; align-items: center; justify-content: center; height: 130px; }
.v span { writing-mode: vertical-rl; transform: rotate(180deg); line-height: 24px; margin-left: 1px; }
.v.on { background: #3d84c4; }
.v.f { height: 124px; } .v.d { height: 140px; }
.table { flex: 1; display: flex; flex-direction: column; }
.thead { height: 38px; background: #102e4c; display: grid; grid-template-columns: 139px 310px 66px 100px 260px 60px 1fr; align-items: center; color: #d9f3ff; letter-spacing: .3px; }
.thead span { height: 28px; line-height: 27px; padding-left: 13px; border-right: 2px solid #0b2545; }
.thead .r { text-align: right; padding-right: 11px; }
.thead .url { padding-left: 45px; border: 0; }
.nodata { flex: 1; display: flex; align-items: center; justify-content: center; font-size: 28px; letter-spacing: .4px; }

/* right panel */
.panel { flex: 1; overflow: hidden; min-width: 0; }
.panel-in { width: 840px; }
.verdict { height: 32px; background: #e68a38; text-align: center; font-weight: 700; line-height: 32px; letter-spacing: .6px; }
.info { height: 360px; background: #1f4163; border-bottom: 2px solid #3d6a92; padding: 0 24px; }
.top { display: flex; height: 160px; }
.os { width: 148px; margin-left: -2px; padding-top: 17px; display: flex; flex-direction: column; align-items: center; color: #60a8dc; }
.os span { color: #66b8f8; font-weight: 500; font-size: 24px; line-height: 28px; margin-top: 9px; }
.meta { margin-left: 30px; flex: 1; }
.fname { width: max-content; font-size: 28px; font-weight: 500; line-height: 36px; height: 39px; margin-top: 12px; background: repeating-linear-gradient(90deg, #fff 0 6px, transparent 6px 9px) bottom / 100% 2px no-repeat; }
.kv { color: #9fb1c3; line-height: 30px; height: 30px; white-space: nowrap; }
.fname + .kv { margin-top: 8px; }
.kv b, .ind b { color: #66b8f8; font-size: 24px; margin-right: 8px; }
.kv .tt { margin-left: 36px; }
.pills { display: flex; gap: 8px; margin-top: 9px; }
.pill { height: 28px; border-radius: 14px; padding: 0 15px 0 16px; background: #3a7abb; color: #fff; font-size: 18.500px; line-height: 28px; letter-spacing: .9px; }
.acts { display: flex; color: #66b8f8; padding-top: 14px; gap: 15px; margin-right: -2px; }
.acts svg:first-child { margin-top: 3px; }
.ind { display: flex; height: 78px; padding-top: 24px; align-items: flex-start; line-height: 32px; }
.ind-l { width: 402px; display: flex; align-items: center; height: 32px; color: #9cc4e6; }
.ind-l b { margin-right: 13px; }
.ind-l .wins { margin: 0 14px 0 10px; }
.ind-r { color: #9fb1c3; }
.ind-r b { margin-right: 12px; }
.ind-r u { text-underline-offset: 3px; text-decoration-thickness: 2px; text-decoration-skip-ink: none; }
.rv { margin-left: 1px; }
.btns { display: grid; gap: 12px; font-size: 24px; font-weight: 500; }
.four { grid-template-columns: repeat(4, 189px); }
.btn { height: 48px; border-radius: 4px; background: #3b6b97; color: #d5e0ea; display: flex; align-items: center; justify-content: center; gap: 16px; padding-left: 2px; }
.btn svg { color: #8aa9c5; }
.btn:first-child { gap: 17px; padding-left: 5px; }
.btn.off { background: #2a567d; color: #6f8faa; gap: 12px; padding: 0; }
.btn.off svg { color: #517797; }
.btn:last-child { gap: 13px; padding: 0; }
.five { grid-template-columns: repeat(5, 1fr); margin-top: 12px; }
.ol { height: 44px; border: 2px solid #4073a3; border-radius: 4px; color: #b7c5d1; display: flex; align-items: center; justify-content: center; white-space: nowrap; }
.ol svg { margin-left: 10px; }
.ol i { width: 28px; height: 28px; border-radius: 4px; background: #377c86; color: #58d3ba; font-size: 20px; line-height: 28px; text-align: center; margin-right: 8px; }
.charts { height: 56px; background: #153656; display: flex; }
.chart { width: 418px; border-right: 4px solid #3d6a92; display: flex; align-items: flex-end; gap: 1.200px; padding-left: 1px; position: relative; }
.chart i { flex: 1; background: #3a7abb; border-top: 1px solid #2a5d92; }
.chart span { position: absolute; right: 4px; top: 4px; color: #55b8a8; font: 700 20px/24px "PT Sans", "Open Sans", sans-serif; font-stretch: 85%; }
#ram { border: 0; width: 422px; padding-right: 6px; }
#ram span { right: 6px; }
.ptabs { height: 48px; background: #102e4d; border-bottom: 2px solid #1f4f7e; display: flex; padding-left: 24px; font-size: 24px; font-weight: 500; line-height: 47px; letter-spacing: .45px; color: #92abc2; }
.pt.on { color: #fff; height: 48px; border-bottom: 3px solid #4a9fe0; margin-right: 47px; }
.pt span { margin-left: 14px; }
.ptabs em { height: 24px; border-radius: 12px; background: #e2bd5f; color: #2b3036; font-size: 21.500px; line-height: 23px; letter-spacing: 0; padding: 0 9px; margin: 12px 0 0 17px; }
.filter { height: 48px; background: #102e4d; display: flex; align-items: center; padding-left: 24px; font-size: 24px; color: #5c7a97; }
.input { width: 580px; height: 32px; background: #214f78; font-size: 20px; line-height: 32px; padding-left: 10px; color: #7296b5; margin-right: 12px; }
.check { width: 28px; height: 28px; border-radius: 4px; background: #276b77; margin-right: 14px; }
.tree { position: relative; padding: 6px 26px 0 46px; display: flex; flex-direction: column; gap: 16px; }
.lines { position: absolute; left: 0; top: 0; fill: none; stroke: #27588a; stroke-width: 2; }
.tri { fill: #a0cfdc; stroke: none; }
.proc { height: 90px; border-left: 6px solid #7a7a7a; border-radius: 3px; background: #275c86; display: grid; grid-template: 42px 42px 6px / 1fr 308px; overflow: hidden; }
.proc.red { border-left-color: #d1554b; }
.l1 { margin-left: 44px; } .l2 { margin-left: 88px; } .l3 { margin-left: 132px; }
.svc { background: #2e6da1; }
.r1 { grid-column: 1 / 3; display: flex; white-space: nowrap; }
.r1 i { height: 40px; line-height: 40px; background: #143253; color: #6e93b5; min-width: 58px; text-align: center; padding: 0 10.500px 0 9.500px; }
.r1 strong { font-weight: 400; margin-left: 12px; line-height: 42px; -webkit-text-stroke: .3px #fff; }
.r1 em { height: 30px; width: 48px; margin: 5px 0 0 37px; border: 2px solid #4a9ad6; border-radius: 2px; text-align: center; font-weight: 500; font-size: 21px; line-height: 27px; color: #d5ecfc; }
.r1 span { margin-left: 36px; line-height: 39px; color: #90c6f0; letter-spacing: -.05px; }
.r1 b { width: 60px; height: 40px; line-height: 40px; background: #418cc0; text-align: center; color: #e4f3ff; font-size: 21px; padding-right: 1px; }
.svc strong { margin-left: 31px; }
.r2 { grid-row: 2 / 4; display: flex; align-items: center; color: #6397bf; padding: 0 8px 0 21px; }
.r2 svg { margin-top: 0; }
.r2 .c { width: 23px; height: 26px; }
.r2 .ar { width: 27px; height: 24px; margin: 2px 12px 0 8px; }
.r2 .sh { width: 22px; height: 26px; }
.r2 .bi { width: 27px; height: 26px; margin-left: 11px; }
.r2 .pill { margin-left: auto; }
.stats { display: grid; grid-template-columns: repeat(3, 100px); gap: 4px; font-weight: 700; color: #b5e0ff; }
.stats div { background: #25507f; border-radius: 4px 4px 0 0; display: flex; align-items: center; justify-content: space-between; padding: 2px 8px 0 11px; }
.stats svg { color: #5a9dd0; }
.stats div:nth-child(2) { padding-left: 6px; }
.sf { width: 22px; height: 27px; }
.sm { width: 32px; height: 30px; }
.sg { width: 27px; height: 30px; }
.life { grid-column: 2; background: #17293c; display: flex; }
.life i { height: 6px; background: #d1554b; }

/* status bar */
.foot { height: 58px; border-top: 2px solid #0b2545; background: #1a4169; display: flex; align-items: center; padding: 2px 0 0 12px; }
.danger { width: 114px; height: 36px; border-radius: 4px; background: #a63c3f; text-align: center; line-height: 38px; font-weight: 500; font-size: 23px; }
.fp { margin-left: 24px; font-weight: 500; line-height: 32px; height: 33px; background: repeating-linear-gradient(90deg, #fff 0 6px, transparent 6px 9px) bottom / 100% 2px no-repeat; }
.ft { color: #90c6f0; margin-left: 16px; }
.try { margin-left: auto; letter-spacing: .43px; }
.reg { width: 260px; height: 44px; margin: 2px 18px 0 36px; border: 2px solid #4073a3; border-radius: 4px; text-align: center; line-height: 41px; font-weight: 500; font-size: 24px; color: #b7c5d1; }
```
